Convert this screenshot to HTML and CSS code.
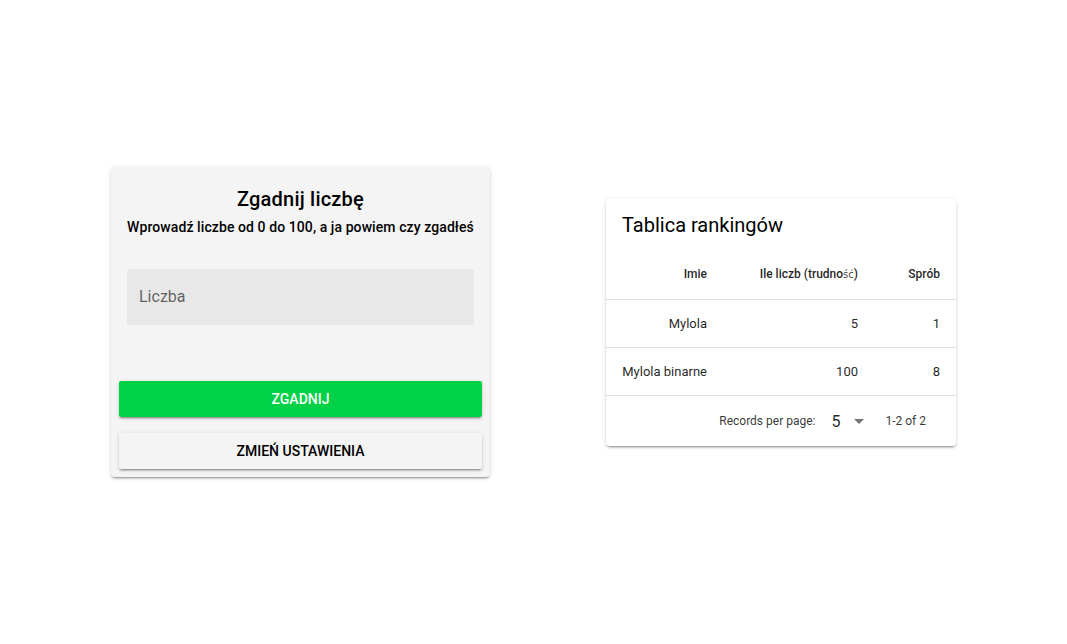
FILE: index.html
```html
<!DOCTYPE html>
<html lang="pl">
<head>
<meta charset="utf-8">
<title>Zgadnij liczbę</title>
<link rel="stylesheet" href="styles.css">
</head>
<body>
<main class="page">
  <section class="card game">
    <h1 class="game-title">Zgadnij liczbę</h1>
    <p class="game-sub">Wprowadź liczbe od 0 do 100, a ja powiem czy zgadłeś</p>
    <div class="field">
      <span class="field-label">Liczba</span>
    </div>
    <div class="actions">
      <button class="btn btn-green">Zgadnij</button>
      <button class="btn btn-plain">Zmień ustawienia</button>
    </div>
  </section>

  <section class="card ranking">
    <h2 class="rank-title">Tablica rankingów</h2>
    <table class="table">
      <colgroup>
        <col class="c1"><col class="c2"><col class="c3">
      </colgroup>
      <thead>
        <tr><th>Imie</th><th>Ile liczb (trudno<span class="fb">ść</span>)</th><th>Spr&oacute;b</th></tr>
      </thead>
      <tbody>
        <tr><td>Mylola</td><td>5</td><td>1</td></tr>
        <tr><td>Mylola binarne</td><td>100</td><td>8</td></tr>
      </tbody>
    </table>
    <div class="footer">
      <span class="rpp">Records per page:</span>
      <span class="select"><span class="sel-val">5</span><span class="caret"></span></span>
      <span class="range">1-2 of 2</span>
    </div>
  </section>
</main>
</body>
</html>
```
FILE: styles.css
```css
html, body {
  margin: 0;
  padding: 0;
  background: #fff;
  font-family: Roboto, "Noto Sans", sans-serif;
  color: rgba(0,0,0,0.87);
}
.page {
  height: 644px;
  display: flex;
  align-items: center;
  justify-content: center;
  gap: 116px;
}
.card {
  border-radius: 4px;
  box-shadow: 0 3px 1px -2px rgba(0,0,0,.2), 0 2px 2px 0 rgba(0,0,0,.14), 0 1px 5px 0 rgba(0,0,0,.12);
}
.game {
  width: 379px;
  background: #f4f4f4;
  padding: 16px 0 8px;
  box-sizing: border-box;
  display: flex;
  flex-direction: column;
}
.game-title {
  margin: 0;
  font-size: 20px;
  line-height: 32px;
  font-weight: 500;
  text-align: center;
  color: #000;
  letter-spacing: 0.01em;
}
.game-sub {
  margin: 2px 0 0;
  font-size: 14px;
  line-height: 20px;
  font-weight: 500;
  text-align: center;
  color: #000;
  letter-spacing: 0.006em;
}
.field {
  margin: 32px 16px 0;
  height: 56px;
  box-sizing: border-box;
  background: #e8e8e8;
  border-radius: 4px 4px 0 0;
  display: flex;
  align-items: center;
  padding: 0 0 2px 12px;
}
.field-label {
  font-size: 16px;
  color: rgba(0,0,0,0.6);
}
.actions {
  margin-top: 56px;
  padding: 0 8px;
  display: flex;
  flex-direction: column;
  gap: 16px;
}
.btn {
  height: 36px;
  border: 0;
  border-radius: 2px;
  font-family: inherit;
  font-size: 14px;
  font-weight: 500;
  text-transform: uppercase;
  box-shadow: 0 3px 1px -2px rgba(0,0,0,.2), 0 2px 2px 0 rgba(0,0,0,.14), 0 1px 5px 0 rgba(0,0,0,.12);
  padding: 0;
}
.btn-green {
  background: #00d146;
  color: #fff;
}
.btn-plain {
  background: #f4f4f4;
  color: #000;
}
.ranking {
  width: 350px;
  background: #fff;
  overflow: hidden;
}
.rank-title {
  margin: 0;
  padding: 10px 16px 0;
  font-size: 20px;
  line-height: 32px;
  font-weight: 400;
  color: #000;
}
.table {
  width: 350px;
  table-layout: fixed;
  border-collapse: collapse;
  margin-top: 3px;
}
.c1 { width: 117px; }
.c2 { width: 151px; }
.c3 { width: 82px; }
.table th, .table td {
  padding: 0 16px;
  text-align: right;
  white-space: nowrap;
}
.table th {
  height: 49px;
  padding-top: 6px;
  font-size: 12px;
  font-weight: 500;
  color: rgba(0,0,0,0.87);
  border-bottom: 1px solid #e0e0e0;
}
.fb {
  font-family: "DejaVu Sans", sans-serif;
  font-weight: 400;
  font-size: 10px;
  color: rgba(0,0,0,0.75);
}
.table td {
  height: 47px;
  font-size: 13px;
  color: rgba(0,0,0,0.87);
  border-bottom: 1px solid #e0e0e0;
}
.footer {
  height: 50px;
  display: flex;
  align-items: center;
  justify-content: flex-end;
  padding-right: 30px;
  padding-top: 1px;
  box-sizing: border-box;
  font-size: 12px;
  color: rgba(0,0,0,0.8);
}
.select {
  display: flex;
  align-items: center;
  margin-left: 16px;
}
.sel-val {
  font-size: 16px;
  color: rgba(0,0,0,0.87);
}
.caret {
  width: 0;
  height: 0;
  border-left: 5px solid transparent;
  border-right: 5px solid transparent;
  border-top: 5px solid rgba(0,0,0,0.54);
  margin-left: 14px;
}
.range {
  margin-left: 21px;
}
```
